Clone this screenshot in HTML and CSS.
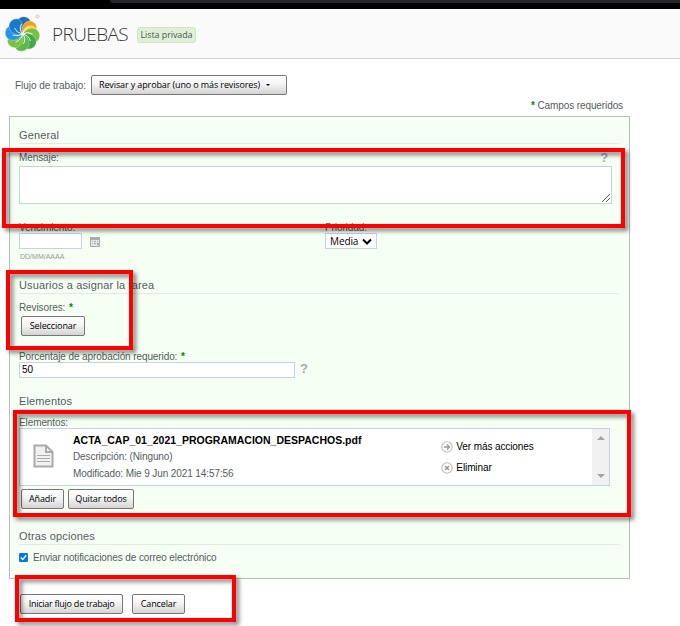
FILE: index.html
```html
<!DOCTYPE html>
<html lang="es">
<head>
<meta charset="utf-8">
<title>PRUEBAS</title>
<link rel="stylesheet" href="styles.css">
</head>
<body>
<div class="topbar"><div class="tab"></div></div>
<header class="header">
  <svg class="logo" viewBox="0 0 40 40">
    <defs><path id="petal" d="M0 0C-6-3-8.500-9-6-13.500C-3.500-18.500 4-18.500 6.500-14C8.500-10 6-7 2.500-5.500C1-4 .5-2 0 0Z"/></defs>
    <g transform="translate(18.500 20)" stroke="#fafafa" stroke-width=".3">
      <use href="#petal" fill="#1c6fb8" transform="rotate(5)"/>
      <use href="#petal" fill="#f7982a" transform="rotate(48) scale(.94)"/>
      <use href="#petal" fill="#ffd91a" transform="rotate(73) scale(.85)"/>
      <use href="#petal" fill="#78c044" transform="rotate(97)"/>
      <use href="#petal" fill="#43a946" transform="rotate(138)"/>
      <use href="#petal" fill="#5cb947" transform="rotate(183)"/>
      <use href="#petal" fill="#7cc242" transform="rotate(228)"/>
      <use href="#petal" fill="#2196e8" transform="rotate(274)"/>
      <use href="#petal" fill="#1a79c8" transform="rotate(320)"/>
      <path d="M0 0Q-4-5-1-10M0 0Q-6-1-8-6M0 0Q-4 3-10 1M0 0Q-1 6-7 8M0 0Q4 4 1 10M0 0Q6 1 8 7M0 0Q5-3 10 0M0 0Q1-5 6-7" fill="none" stroke-width=".9"/>
    </g>
    <circle cx="33.500" cy="2.500" r="1.600" fill="#eee" stroke="#bbb" stroke-width=".7"/>
  </svg>
  <h1>PRUEBAS</h1>
  <span class="badge">Lista privada</span>
</header>
<main>
  <div class="workflow"><span class="flow-label">Flujo de trabajo:</span><button class="btn flow-btn"><span>Revisar y aprobar (uno o más revisores)</span><i></i></button></div>
  <div class="required"><b>*</b> <span>Campos requeridos</span></div>
  <form class="panel">
    <section class="general">
      <h2>General</h2>
      <div class="label-row"><label>Mensaje:</label><b class="help">?</b></div>
      <div class="message field"><svg viewBox="0 0 10 10"><path d="M1 9L9 1M5 9L9 5" stroke="#555" stroke-width="1"/></svg></div>
      <div class="columns">
        <div><label class="venc">Vencimiento:</label>
          <div class="date-row"><div class="field date"></div>
            <svg class="calendar" viewBox="0 0 12 12"><path d="M1.500 1.500h9v9h-9z" fill="#e4e8e3" stroke="#aaa"/><path fill="#aaa" d="M1 1h10v3H1zM3 5h1v1H3zM5 5h2v1H5zM8 5h1v1H8zM3 7h1v1H3zM5 7h2v1H5zM8 7h2v2H8z"/></svg></div>
          <div class="hint">DD/MM/AAAA</div></div>
        <div><label class="prio">Prioridad:</label>
          <div class="field select"><span>Media</span><svg viewBox="0 0 10 7"><path d="M1 1.500L5 5.500L9 1.500" fill="none" stroke="#000" stroke-width="2"/></svg></div></div>
      </div>
    </section>
    <section class="users">
      <h2 class="users-title">Usuarios a asignar la tarea</h2>
      <label class="reviewers">Revisores: <b>*</b></label>
      <button type="button" class="btn select-btn"><span>Seleccionar</span></button>
      <label class="percent-label"><span>Porcentaje de aprobación requerido:</span> <b>*</b></label>
      <div class="percent-row"><div class="field percent">50</div><b class="help">?</b></div>
    </section>
    <section class="items">
      <h2>Elementos</h2>
      <label class="items-label">Elementos:</label>
      <div class="field list">
        <svg class="doc" viewBox="0 0 21 24"><path d="M1.500 1.500h11.500l6.500 6.500v14.500h-18zM13 1.500v6.500h6.500" fill="#f1f1f1" stroke="#aaa" stroke-width="2"/><path d="M4 11.500h13M4 14.500h13M4 17.500h13" stroke="#aaa"/></svg>
        <div class="info"><strong>ACTA_CAP_01_2021_PROGRAMACION_DESPACHOS.pdf</strong><span class="desc">Descripción: (Ninguno)</span><span class="mod">Modificado: Mie 9 Jun 2021 14:57:56</span></div>
        <div class="actions">
          <div><svg viewBox="0 0 12 12"><circle cx="6" cy="6" r="5.200" fill="#fff" stroke="#bbb" stroke-width="1.100"/><path d="M3 6h5M6 3.500L8.500 6L6 8.500" fill="none" stroke="#999" stroke-width="1.400"/></svg><span class="more">Ver más acciones</span></div>
          <div><svg viewBox="0 0 12 12"><circle cx="6" cy="6" r="5.200" fill="#fff" stroke="#bbb" stroke-width="1.100"/><path d="M4 4L8 8M8 4L4 8" stroke="#999" stroke-width="1.600"/></svg><span>Eliminar</span></div>
        </div>
        <div class="scroll"><i class="up"></i><i class="down"></i></div>
      </div>
      <div class="buttons"><button type="button" class="btn add"><span>Añadir</span></button><button type="button" class="btn remove"><span>Quitar todos</span></button></div>
    </section>
    <section class="other">
      <h2>Otras opciones</h2>
      <div class="notify"><svg viewBox="0 0 10 10"><rect width="10" height="10" rx="1.500" fill="#0875e8"/><path d="M2 5L4.200 7.300L8 2.500" fill="none" stroke="#fff" stroke-width="1.500"/></svg><span>Enviar notificaciones de correo electrónico</span></div>
    </section>
  </form>
  <div class="footer"><button class="btn start"><span>Iniciar flujo de trabajo</span></button><button class="btn cancel"><span>Cancelar</span></button></div>
</main>
<div class="mark mark-message"></div>
<div class="mark mark-users"></div>
<div class="mark mark-items"></div>
<div class="mark mark-footer"></div>
</body>
</html>
```
FILE: styles.css
```css
* { box-sizing: border-box; }
body { margin: 0; width: 680px; height: 626px; overflow: hidden; position: relative; background: #fff; color: #555c60; font: 10px/13px "Liberation Sans", Arial, sans-serif; letter-spacing: -.1px; }
svg { display: block; flex: none; }
span, label, strong { white-space: nowrap; }
.topbar { height: 9px; background: #000; }
.tab { height: 3px; margin-left: 110px; background: #24252a; border-bottom-left-radius: 4px; }
.header { height: 50px; display: flex; align-items: center; background: #fafafa; border-bottom: 1px solid #ccc; padding-left: 4px; }
.logo { width: 40px; height: 40px; }
h1 { margin: 0 0 0 8px; width: 76px; font: 300 19px/24px "Open Sans", sans-serif; letter-spacing: -.6px; color: #333; }
.badge { margin: 2px 0 0 9px; width: 59px; height: 16px; background: #dff0d8; border: 1px solid #d0e7c6; border-radius: 3px; font: 9px/14px "Open Sans", sans-serif; text-align: center; color: #555; }
.workflow { display: flex; align-items: center; height: 20px; margin-top: 16px; padding-left: 15px; }
.flow-label { width: 76px; padding-top: 1px; letter-spacing: -.04px; }
.btn { height: 20px; border: 1px solid #777; border-radius: 2px; padding: 0; display: flex; align-items: center; justify-content: center; background: linear-gradient(#fff, #f4f4f4 45%, #d4d4d4); color: #000; font: 9px/12px "Open Sans", sans-serif; letter-spacing: -.12px; }
.flow-btn { width: 196px; justify-content: flex-start; padding-left: 7px; }
.flow-btn i { margin-left: 6px; border: 2px solid transparent; border-top: 2px solid #000; border-bottom: 0; }
.required { height: 13px; margin: 4px 57px 4px 0; text-align: right; }
b { color: #080; margin-left: 1px; }
.panel { margin: 0 50px 0 9px; height: 463px; border: 1px solid #bbb; background: #f5fff3; padding: 12px 10px 0 9px; }
h2 { margin: 0; height: 15px; font-size: 11px; line-height: 13px; font-weight: normal; letter-spacing: .14px; border-bottom: 1px solid #e4e8e4; }
label { display: block; height: 12px; }
.general { height: 150px; }
.label-row { display: flex; justify-content: space-between; margin-top: 7px; height: 15px; padding-right: 11px; }
.help { color: #aaa; font-size: 13px; line-height: 14px; margin: 0; }
.field { background: #fff; border: 1px solid #c3d3df; color: #000; }
.message { width: 593px; height: 38px; display: flex; align-items: flex-end; justify-content: flex-end; }
.message svg { width: 10px; height: 10px; }
.columns { display: grid; grid-template-columns: 306px 1fr; margin-top: 17px; }
.date-row { display: flex; gap: 7px; }
.date { width: 63px; height: 16px; }
.calendar { width: 12px; height: 12px; margin-top: 3px; }
.hint { font-size: 7px; line-height: 9px; margin: 3px 0 0 1px; color: #999; letter-spacing: 0; }
.select { width: 52px; height: 16px; padding: 0 4px; display: flex; justify-content: space-between; align-items: center; font: 10px/14px "Open Sans", sans-serif; }
.select svg { width: 10px; height: 7px; }
.users { height: 116px; }
.reviewers { margin-top: 7px; }
.select-btn { width: 64px; margin: 3px 0 0 2px; }
.percent-label { margin-top: 14px; }
.percent-row { display: flex; gap: 5px; }
.percent { width: 276px; height: 16px; padding-left: 2px; line-height: 14px; letter-spacing: 0; }
.items { height: 135px; }
.items-label { margin-top: 6px; }
.list { width: 591px; height: 58px; display: flex; padding-left: 13px; }
.doc { width: 21px; height: 24px; margin-top: 15px; }
.info { width: 370px; padding: 4px 0 0 19px; }
.info span, .info strong { display: block; }
.info span { color: #555c60; }
.info strong { font-size: 10.5px; height: 17px; padding-top: 1px; letter-spacing: 0; }
.desc { height: 17px; }
.actions { width: 169px; padding: 11px 0 0 18px; }
.actions div { display: flex; gap: 3px; align-items: center; height: 13px; margin-bottom: 8px; }
.actions svg { width: 12px; height: 12px; }
.scroll { width: 17px; height: 56px; background: #f1f1f1; display: flex; flex-direction: column; justify-content: space-between; align-items: center; padding: 7px 0; }
.scroll i { border: 4px solid transparent; }
.scroll .up { border-top: 0; border-bottom-color: #a3a3a3; }
.scroll .down { border-bottom: 0; border-top-color: #a3a3a3; }
.buttons { display: flex; gap: 4px; padding: 3px 0 0 2px; }
.add { width: 43px; }
.remove { width: 66px; }
.notify { display: flex; align-items: center; gap: 5px; margin-top: 6px; }
.notify svg { width: 9px; height: 9px; margin-top: -1px; }
.footer { display: flex; gap: 9px; margin: 15px 0 0 20px; }
.start { width: 103px; }
.start span { letter-spacing: -.25px; }
.cancel { width: 53px; }
.mark { position: absolute; border: 4px solid #f00; filter: drop-shadow(3px 3px 2px rgba(0,0,0,.5)); pointer-events: none; }
.mark-message { left: 2px; top: 148px; width: 623px; height: 80px; }
.mark-users { left: 6px; top: 270px; width: 127px; height: 80px; }
.mark-items { left: 13px; top: 410px; width: 618px; height: 107px; }
.mark-footer { left: 15px; top: 575px; width: 221px; height: 47px; }
```
